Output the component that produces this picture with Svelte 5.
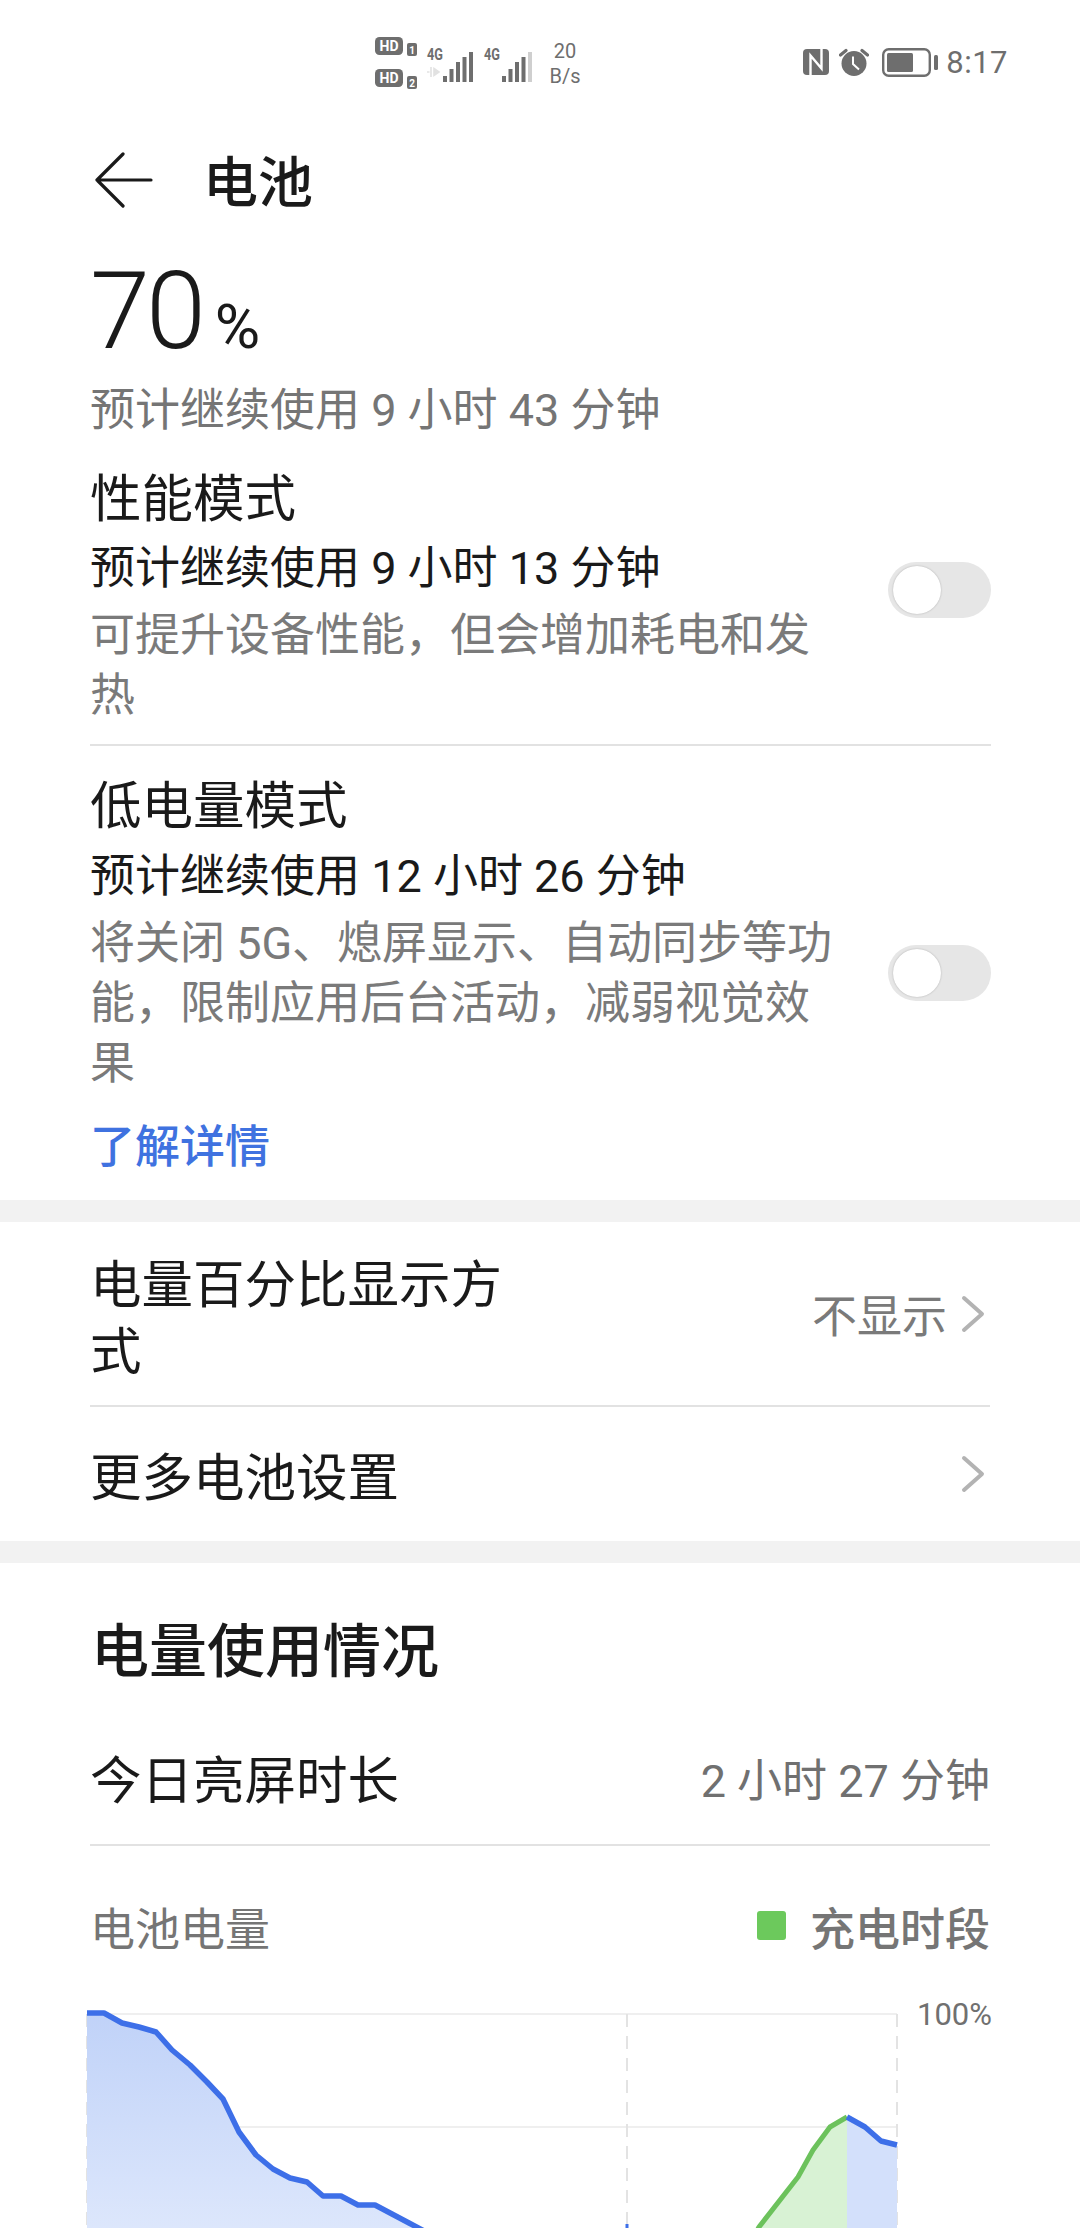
<script>
  const blue = [[87,2013],[104,2013],[122,2023],[139,2027],[156,2032],[172,2050],[190,2065],[207,2082],[223,2099],[239,2132],[256,2155],[273,2169],[290,2178],[307,2182],[323,2196],[341,2196],[358,2205],[375,2205],[392,2214],[409,2223],[426,2232]];
  const green = [[752,2240],[759,2227],[798,2177],[813,2150],[830,2127],[847,2117]];
  const blue2 = [[847,2117],[865,2127],[881,2141],[897,2145]];
  const Y0 = 1990;
  const H = 240;
  const pts = (a) => a.map(([x, y]) => `${x},${y - Y0}`).join(' ');
  const area = (a) => `${a[0][0]},${H} ${pts(a)} ${a[a.length - 1][0]},${H}`;
  const bars = [[69, 44], [75.5, 37], [82, 30], [88.5, 25], [95, 20]];
  const bars2 = [[128, 44], [134.5, 37], [141, 30], [147.5, 25], [154, 20]];
</script>

<div class="page">
  <header class="status">
    <svg class="net" width="212" height="60" viewBox="0 0 212 60">
      <rect x="1" y="5" width="28" height="18" rx="4.5" fill="#6e6e6e" />
      <text x="15" y="19" class="hdt">HD</text>
      <rect x="33" y="11" width="10" height="13" rx="2" fill="#6e6e6e" />
      <text x="38" y="22" class="hdn">1</text>
      <rect x="1" y="37" width="28" height="18" rx="4.5" fill="#6e6e6e" />
      <text x="15" y="51" class="hdt">HD</text>
      <rect x="33" y="44" width="10" height="13" rx="2" fill="#6e6e6e" />
      <text x="38" y="55" class="hdn">2</text>

      <text x="53" y="28" class="g4" textLength="16" lengthAdjust="spacingAndGlyphs">4G</text>
      <path d="M53 40h2.500M57 35v10M60 36.500l5 3.500-5 3.500z" fill="#e2e2e2" stroke="#e2e2e2" stroke-width="1.600" />
      {#each bars as [x, y]}
        <rect {x} {y} width="4" height={50 - y} fill="#6e6e6e" />
      {/each}

      <text x="110" y="28" class="g4" textLength="16" lengthAdjust="spacingAndGlyphs">4G</text>
      {#each bars2 as [x, y], i}
        <rect {x} {y} width="4" height={50 - y} fill={i === 4 ? '#cfcfcf' : '#6e6e6e'} />
      {/each}

      <text x="191" y="26" class="spd">20</text>
      <text x="191" y="51" class="spd">B/s</text>
    </svg>
    <div class="sys">
      <svg width="26" height="26" viewBox="0 0 26 26">
        <rect width="26" height="26" rx="4" fill="#6e6e6e" />
        <path d="M7.500 26V6.500L18.500 19.500V0" fill="none" stroke="#fff" stroke-width="2.400" />
      </svg>
      <svg width="30" height="28" viewBox="0 0 30 28">
        <circle cx="15" cy="15.500" r="12.500" fill="#6e6e6e" />
        <path d="M14 8.500v7.500l6 5.500" fill="none" stroke="#fff" stroke-width="2" />
        <path d="M1.500 7L7 2.500M28.500 7L23 2.500" stroke="#6e6e6e" stroke-width="3.200" stroke-linecap="round" />
      </svg>
      <svg class="batt" width="56" height="29" viewBox="0 0 56 29">
        <rect x="1.200" y="1.200" width="46.600" height="26.600" rx="5.500" fill="none" stroke="#6e6e6e" stroke-width="2.400" />
        <rect x="5" y="5" width="26" height="19" rx="1.500" fill="#6e6e6e" />
        <rect x="52" y="7" width="4" height="15" rx="1.500" fill="#6e6e6e" />
      </svg>
      <span class="time">8:17</span>
    </div>
  </header>

  <div class="nav">
    <svg width="58" height="56" viewBox="0 0 58 56" class="back">
      <path d="M56 28H2M2 28L28 2M2 28l26 26" fill="none" stroke="#1a1a1a" stroke-width="3.200" stroke-linecap="round" stroke-linejoin="round" />
    </svg>
    <h1>电池</h1>
  </div>

  <section class="top">
    <div class="level"><span class="num">70</span><span class="pct">%</span></div>
    <p class="est grey">预计继续使用 9 小时 43 分钟</p>
  </section>

  <section class="mode first">
    <div class="mode-text">
      <div class="mode-title">性能模式</div>
      <div class="est dark">预计继续使用 9 小时 13 分钟</div>
      <div class="desc">可提升设备性能，但会增加耗电和发热</div>
    </div>
    <div class="switch"><i></i></div>
  </section>
  <section class="mode second">
    <div class="mode-text">
      <div class="mode-title">低电量模式</div>
      <div class="est dark">预计继续使用 12 小时 26 分钟</div>
      <div class="desc">将关闭 5G、熄屏显示、自动同步等功能，限制应用后台活动，减弱视觉效果</div>
      <div class="link">了解详情</div>
    </div>
    <div class="switch"><i></i></div>
  </section>

  <div class="band"></div>

  <section class="list">
    <div class="row tall">
      <div class="row-title narrow">电量百分比显示方式</div>
      <div class="row-val">不显示<svg class="chev" width="24" height="38" viewBox="0 0 24 38"><path d="M3 3l18 16L3 35" fill="none" stroke="#b3b3b3" stroke-width="4" stroke-linecap="round" stroke-linejoin="round" /></svg></div>
    </div>
    <div class="row short">
      <div class="row-title">更多电池设置</div>
      <div class="row-val"><svg class="chev" width="24" height="38" viewBox="0 0 24 38"><path d="M3 3l18 16L3 35" fill="none" stroke="#b3b3b3" stroke-width="4" stroke-linecap="round" stroke-linejoin="round" /></svg></div>
    </div>
  </section>

  <div class="band"></div>

  <section class="usage">
    <h2>电量使用情况</h2>
    <div class="usage-row">
      <span class="row-title">今日亮屏时长</span>
      <span class="row-val time-val">2 小时 27 分钟</span>
    </div>
    <div class="legend">
      <span>电池电量</span>
      <span class="key"><i></i>充电时段</span>
    </div>
    <div class="chart">
      <svg width="1080" height={H} viewBox="0 0 1080 {H}">
        <defs>
          <linearGradient id="bf" x1="0" y1="0" x2="0" y2="1">
            <stop offset="0" stop-color="#c0d2f8" />
            <stop offset="1" stop-color="#dde7fc" />
          </linearGradient>
        </defs>
        <path d="M87 {2014 - Y0}H897M87 {2127 - Y0}H897" stroke="#efefef" stroke-width="2" />
        <path d="M87 {2014 - Y0}V{H}M627 {2014 - Y0}V{H}M897 {2014 - Y0}V{H}" stroke="#e3e3e3" stroke-width="2" stroke-dasharray="13 9" />
        <polygon points={area(blue)} fill="url(#bf)" />
        <polygon points={area(green)} fill="#d8f2d4" />
        <polygon points={area(blue2)} fill="#d3e0fb" />
        <polyline points={pts(blue)} fill="none" stroke="#3d6fe8" stroke-width="5.500" stroke-linejoin="round" />
        <polyline points={pts(green)} fill="none" stroke="#6cc25c" stroke-width="5" stroke-linejoin="round" />
        <polyline points={pts(blue2)} fill="none" stroke="#3d6fe8" stroke-width="5.500" stroke-linejoin="round" />
        <path d="M627 {2224 - Y0}v12" stroke="#3d6fe8" stroke-width="3" />
        <text x="917" y={2025 - Y0} class="axis">100%</text>
      </svg>
    </div>
  </section>
</div>

<style>
  :global(body) { margin: 0; background: #fff; }
  .page {
    width: 1080px;
    height: 2228px;
    overflow: hidden;
    background: #fff;
    font-family: Roboto, "Noto Sans CJK SC", sans-serif;
    color: #1a1a1a;
  }
  .status {
    height: 124px;
    display: flex;
    align-items: center;
    padding-left: 374px;
    padding-right: 72px;
    justify-content: space-between;
    color: #6e6e6e;
  }
  .net { display: block; }
  .hdt { font: 700 14px Roboto, sans-serif; fill: #fff; text-anchor: middle; }
  .hdn { font: 700 10px Roboto, sans-serif; fill: #fff; text-anchor: middle; }
  .g4 { font: 700 16px Roboto, sans-serif; fill: #6e6e6e; }
  .spd { font: 400 20px Roboto, sans-serif; fill: #6e6e6e; text-anchor: middle; }
  .sys { display: flex; align-items: center; gap: 10px; }
  .batt { margin-left: 3px; }
  .time { font-size: 31px; letter-spacing: .5px; color: #6e6e6e; margin-left: -2px; }

  .nav { height: 116px; display: flex; align-items: center; padding-left: 95px; }
  .back { flex: none; margin-bottom: 4px; }
  h1 { font-size: 55px; font-weight: 500; margin: 2px 0 0 50px; line-height: 88px; }

  .top { padding: 10px 90px 0; }
  .level { height: 122px; display: flex; align-items: baseline; }
  .num { font-size: 108px; font-weight: 300; line-height: 122px; letter-spacing: -4px; }
  .pct { font-size: 62px; font-weight: 400; margin-left: 13px; }
  .est { font-size: 45px; line-height: 60px; margin: 0; }
  .top .est { margin-top: 9px; }
  .grey { color: #757575; }
  .dark { color: #1a1a1a; }

  .mode {
    margin: 0 89px 0 90px;
    display: flex;
    align-items: center;
    justify-content: space-between;
  }
  .mode.first { border-bottom: 2px solid #e2e2e2; padding: 25px 0 18px; }
  .mode.first .est { margin-top: 5px; }
  .mode.first .switch { margin-bottom: 12px; }
  .mode.second { padding: 27px 0 22px; }
  .mode.second .est { margin-top: 6px; }
  .mode.second .switch { margin-bottom: 6px; }
  .mode-text { width: 745px; }
  .mode-title { font-size: 51.500px; line-height: 68px; }
  .desc { font-size: 45px; line-height: 60px; color: #7a7a7a; margin-top: 7px; }
  .link { font-size: 45px; line-height: 60px; color: #3f72e0; margin-top: 24px; font-weight: 500; }
  .switch {
    width: 103px;
    height: 56px;
    background: #e6e6e6;
    border-radius: 28px;
    position: relative;
    flex: none;
  }
  .switch i {
    position: absolute;
    left: 5px;
    top: 4px;
    width: 48px;
    height: 48px;
    border-radius: 50%;
    background: #fff;
    box-shadow: 0 0 2px rgba(0,0,0,.25);
  }
  .band { height: 22px; background: #f2f2f2; }

  .list { padding: 0 90px; }
  .row { display: flex; align-items: center; justify-content: space-between; }
  .tall { height: 183px; border-bottom: 2px solid #e2e2e2; }
  .short { height: 134px; }
  .short .row-title { margin-top: 8px; }
  .row-title { font-size: 51.500px; line-height: 67px; color: #1a1a1a; }
  .narrow { width: 440px; margin-top: 10px; }
  .row-val { display: flex; align-items: center; font-size: 45px; color: #7a7a7a; }
  .chev { margin-left: 14px; margin-right: 5px; }

  h2 { font-size: 58px; font-weight: 500; margin: 0; padding: 56px 91px 0; line-height: 66px; }
  .usage-row {
    margin: 0 90px;
    height: 161px;
    padding-top: 33px;
    display: flex;
    align-items: center;
    justify-content: space-between;
    border-bottom: 2px solid #e2e2e2;
    box-sizing: border-box;
  }
  .time-val { font-size: 45px; color: #707070; margin-bottom: 8px; }
  .legend {
    margin: 0 90px;
    height: 144px;
    padding-top: 16px;
    box-sizing: border-box;
    display: flex;
    align-items: center;
    justify-content: space-between;
    font-size: 45px;
    color: #757575;
  }
  .key { display: flex; align-items: center; font-weight: 500; }
  .key i { width: 29px; height: 29px; background: #6cc95c; margin: 0 24px 2px 0; border-radius: 3px; }
  .chart { height: 240px; }
  .chart svg { display: block; }
  .axis { font: 400 31px Roboto, sans-serif; fill: #707070; }
</style>
